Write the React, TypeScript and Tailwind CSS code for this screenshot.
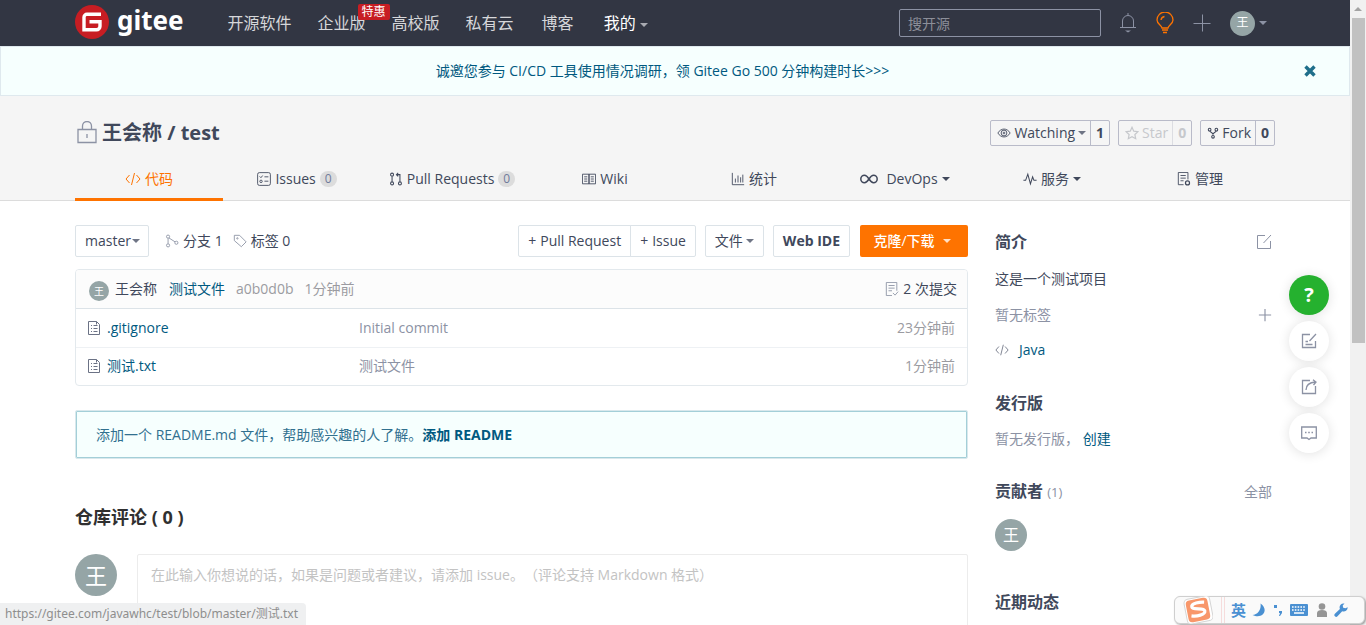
import React from "react";

type IconProps = { className?: string; children: React.ReactNode; box?: string };
function Icon({ className = "", children, box = "0 0 16 16" }: IconProps) {
  return (
    <svg viewBox={box} className={`shrink-0 ${className}`} fill="none" stroke="currentColor" strokeWidth="1" aria-hidden="true">
      {children}
    </svg>
  );
}

function Caret({ className = "" }: { className?: string }) {
  return (
    <svg viewBox="0 0 8 4" className={`h-1 w-2 shrink-0 ${className}`} fill="currentColor" aria-hidden="true">
      <path d="M0 0h8L4 4z" />
    </svg>
  );
}

function Avatar({ className }: { className: string }) {
  return (
    <span className={`flex shrink-0 items-center justify-center rounded-full bg-[#95a5a6] leading-none text-white ${className}`}>王</span>
  );
}

function CodeIcon({ className }: { className: string }) {
  return (
    <Icon className={className}>
      <path d="M4.500 4 1 8l3.500 4M11.500 4 15 8l-3.500 4M9.500 2l-3 12" />
    </Icon>
  );
}

function FileIcon() {
  return (
    <Icon className="h-4 w-4 text-[#6b7285]">
      <path d="M2.500 1.500h8l3 3v10h-11zM10.500 1.500v3M5 5.500h1M7.500 5.500h4M5 8.500h1M7.500 8.500h4M5 11.500h1M7.500 11.500h4" />
    </Icon>
  );
}

function Header() {
  return (
    <header className="h-[46px] shrink-0 bg-[#323643]">
      <div className="mx-auto flex h-full max-w-[1200px] items-center">
        <a href="#home" className="-mt-0.5 flex items-center gap-2 text-white">
          <svg viewBox="0 0 34 34" className="h-[34px] w-[34px]" aria-hidden="true">
            <circle cx="17" cy="17" r="17" fill="#c71d23" />
            <path d="M26 9.300H12a3 3 0 0 0-3 3v12.400h12.500a3.500 3.500 0 0 0 3.500-3.500v-4.500H14.500" fill="none" stroke="#fff" strokeWidth="3.400" />
          </svg>
          <span className="-mt-1 font-['Noto_Sans',sans-serif] text-[26px] leading-8 font-bold">gitee</span>
        </a>
        <nav className="ml-11 flex items-center gap-[26px] text-base text-[#d6d7da]">
          <a href="#explore">开源软件</a>
          <a href="#enterprise" className="relative">
            企业版
            <span className="absolute -top-[7px] left-10 w-8 rounded-xs bg-[#c71d23] text-center text-xs leading-4 text-white">特惠</span>
          </a>
          <a href="#education">高校版</a>
          <a href="#cloud">私有云</a>
          <a href="#blog" className="pl-0.5">博客</a>
          <button className="flex items-center gap-1 pl-1 text-white">
            我的
            <Caret className="mt-1 text-[#a9abb2]" />
          </button>
        </nav>
        <input
          type="text"
          aria-label="搜开源"
          placeholder="搜开源"
          className="ml-auto h-7 w-[202px] rounded-xs border border-[#8c92a4] bg-transparent px-2 text-sm text-white placeholder:text-[#8c8f99]"
        />
        <div className="mr-2 ml-[18px] flex items-center gap-[19px] text-[#8c92a4]">
          <button aria-label="通知">
            <Icon className="h-[22px] w-[18px]" box="0 0 18 22">
              <path d="M9 1v2M3.500 15.500V9a5.500 5.500 0 0 1 11 0v6.500M1 15.500h16" />
              <path d="M6 18.500h6l-3 2z" fill="currentColor" stroke="none" />
            </Icon>
          </button>
          <button aria-label="动态" className="text-[#fe7300]">
            <Icon className="h-[22px] w-[18px]" box="0 0 18 22">
              <path strokeWidth="1.300" d="M6 16c0-2.500-5-4-5-8a8 8 0 0 1 16 0c0 4-5 5.500-5 8zM5 8a4 4 0 0 1 3.500-3.500" />
              <path strokeWidth="1.600" d="M6 18h6M7 20.500h4" />
            </Icon>
          </button>
          <button aria-label="新建">
            <Icon className="h-[18px] w-[18px]" box="0 0 18 18">
              <path d="M9.500 .5v17M.5 9.500h17" />
            </Icon>
          </button>
          <button aria-label="用户" className="flex items-center gap-1">
            <Avatar className="h-[25px] w-[25px] text-xs" />
            <Caret />
          </button>
        </div>
      </div>
    </header>
  );
}

function CountButton({ icon, label, count, caret, muted }: { icon: React.ReactNode; label: string; count: number; caret?: boolean; muted?: boolean }) {
  return (
    <div className={`flex h-[26px] items-stretch rounded-xs border border-[#b9bbc9] text-sm ${muted ? "text-[#c6c8cc]" : "text-[#40485b]"}`}>
      <button className="flex items-center gap-[3px] pr-1 pl-1.5">
        {icon}
        {label}
        {caret && <Caret className="text-[#6f7585]" />}
      </button>
      <a href="#count" className={`flex w-[19px] items-center justify-center border-l font-bold ${muted ? "border-[#dcdde2]" : "border-[#b9bbc9]"}`}>
        {count}
      </a>
    </div>
  );
}

function Badge() {
  return <span className="rounded-full bg-[#dcdcdc] px-[5px] text-xs leading-4 text-[#6f7a9b]">0</span>;
}

function Tab({ children, active }: { children: React.ReactNode; active?: boolean }) {
  return (
    <a
      href="#tab"
      className={`flex h-[43px] items-center justify-center gap-1 border-b-3 pt-0.5 ${active ? "border-[#fe7300] text-[#fe7300]" : "border-transparent"}`}
    >
      {children}
    </a>
  );
}

function RepoHeader() {
  return (
    <section className="shrink-0 border-b border-[#dcdcdc] bg-[#f5f5f5] pt-6 text-[#40485b]">
      <div className="mx-auto max-w-[1200px]">
        <div className="flex h-[26px] items-center">
          <Icon className="mx-0.5 h-6 w-5 text-[#8c92a4]" box="0 0 20 24">
            <path strokeWidth="1.300" d="M1 8.500h18v13H1zM5.500 8.500V5a4.500 4.500 0 0 1 9 0v3.500M10 13v4" />
          </Icon>
          <h1 className="ml-[3px] text-xl leading-6 font-bold">
            <a href="#owner">王会称</a> / <a href="#repo">test</a>
          </h1>
          <div className="ml-auto flex gap-2">
            <CountButton
              caret
              label="Watching"
              count={1}
              icon={
                <Icon className="h-3.5 w-3.5">
                  <path d="M1 8c3.500-6 10.500-6 14 0-3.500 6-10.500 6-14 0z" />
                  <circle cx="8" cy="8" r="3.300" />
                  <circle cx="8" cy="8" r="1" />
                </Icon>
              }
            />
            <CountButton
              muted
              label="Star"
              count={0}
              icon={
                <Icon className="h-3.5 w-3.5">
                  <path strokeWidth="1.400" d="m8 1.500 2 4.400 4.800.6-3.500 3.300.9 4.700L8 12.200l-4.200 2.300.9-4.700L1.200 6.500 6 5.900z" />
                </Icon>
              }
            />
            <CountButton
              label="Fork"
              count={0}
              icon={
                <Icon className="h-3 w-3">
                  <g strokeWidth="1.400">
                    <circle cx="3.500" cy="3.500" r="1.800" />
                    <circle cx="12.500" cy="3.500" r="1.800" />
                    <circle cx="8" cy="13" r="1.800" />
                    <path d="M3.500 5.500 8 9l4.500-3.500M8 9v2" />
                  </g>
                </Icon>
              }
            />
          </div>
        </div>
        <nav className="mt-3 -mb-px grid grid-cols-[148fr_148fr_162fr_144fr_154fr_148fr_146fr_150fr] text-sm">
          <Tab active>
            <CodeIcon className="h-4 w-4" />
            代码
          </Tab>
          <Tab>
            <Icon className="h-3.5 w-3.5">
              <rect x=".7" y=".7" width="14.600" height="14.600" rx="2" />
              <path d="m3 5 1.500 1.500L6.500 4M8.500 5.500H13M8.500 10.500H13" />
              <circle cx="4.600" cy="10.700" r="1.400" />
            </Icon>
            Issues <Badge />
          </Tab>
          <Tab>
            <Icon className="h-3.5 w-3.5">
              <g strokeWidth="1.200">
                <circle cx="3.500" cy="3" r="1.700" />
                <circle cx="3.500" cy="13" r="1.700" />
                <circle cx="12.500" cy="13" r="1.700" />
                <path d="M3.500 5v6M8.500 3h4v8M10.500 1l-2 2 2 2" />
              </g>
            </Icon>
            Pull Requests <Badge />
          </Tab>
          <Tab>
            <Icon className="h-3.5 w-3.5">
              <path d="M.5 2.500H8v11H.5zM8 2.500h7.500v11H8zM2.500 5.500h3.500M2.500 8h3.500M2.500 10.500h3.500M10 5.500h3.500M10 8h3.500M10 10.500h3.500" />
            </Icon>
            Wiki
          </Tab>
          <Tab>
            <Icon className="h-3.5 w-3.5">
              <path d="M1.500 1v13.500H15M5 12V7.500M8 12V4M11 12V6M13.500 12V3" />
            </Icon>
            统计
          </Tab>
          <Tab>
            <Icon className="mr-1 h-3 w-[18px]" box="0 0 18 12">
              <path strokeWidth="1.500" d="M9 6C7 3 6 2.300 4.500 2.300a3.700 3.700 0 0 0 0 7.400C6 9.700 7 9 9 6s3-3.700 4.500-3.700a3.700 3.700 0 0 1 0 7.400C12 9.700 11 9 9 6z" />
            </Icon>
            DevOps <Caret />
          </Tab>
          <Tab>
            <Icon className="h-3.5 w-3.5">
              <path strokeWidth="1.200" d="M.5 9.500H3L5.500 2.500l3 11 2.500-8 1.500 4h3" />
            </Icon>
            服务 <Caret />
          </Tab>
          <Tab>
            <Icon className="h-3.5 w-3.5">
              <path d="M7.500 14.500H1.500v-14h11v8M4 4h6M4 7h6M4 10h3.500" />
              <circle cx="12" cy="12.500" r="2.300" strokeWidth="1.400" />
            </Icon>
            管理
          </Tab>
        </nav>
      </div>
    </section>
  );
}

function Toolbar() {
  const button = "flex h-8 items-center rounded-xs border border-[#dce3e8] px-[9px]";
  return (
    <div className="flex items-center text-sm">
      <button className={`${button} gap-px pr-2`}>
        master <Caret className="text-[#6f7585]" />
      </button>
      <a href="#branches" className="ml-4 flex items-center gap-1">
        <Icon className="h-3.5 w-3.5 text-[#8c92a4]">
          <circle cx="3.500" cy="3" r="1.800" />
          <circle cx="3.500" cy="13" r="1.800" />
          <circle cx="13" cy="10" r="1.800" />
          <path d="M3.500 5v6M4.500 4.500 11.500 9" />
        </Icon>
        分支 1
      </a>
      <a href="#tags" className="ml-2.5 flex items-center gap-1">
        <Icon className="h-3.5 w-3.5 text-[#8c92a4]">
          <path d="M1.500 1.500h6l7.500 7.500-5.500 5.500L1.500 7.500z" />
          <circle cx="5" cy="5" r=".8" />
        </Icon>
        标签 0
      </a>
      <div className="ml-auto flex">
        <a href="#new-pull" className={`${button} gap-1 rounded-r-none`}>
          <span>+</span>Pull Request
        </a>
        <a href="#new-issue" className={`${button} -ml-px gap-1 rounded-l-none`}>
          <span>+</span>Issue
        </a>
      </div>
      <button className={`${button} ml-[9px] gap-[3px]`}>
        文件 <Caret className="text-[#6f7585]" />
      </button>
      <a href="#ide" className={`${button} ml-[9px] font-bold`}>Web IDE</a>
      <button className="ml-2.5 flex h-8 w-[108px] items-center justify-center gap-2 rounded-xs bg-[#fe7300] pr-1 font-medium text-white">
        克隆/下载 <Caret className="text-[#ffe0c6]" />
      </button>
    </div>
  );
}

const files = [
  { name: ".gitignore", message: "Initial commit", age: "23分钟前" },
  { name: "测试.txt", message: "测试文件", age: "1分钟前" },
];

function FileBox() {
  return (
    <div className="mt-3 overflow-hidden rounded-sm border border-[#e3e9ed] text-sm">
      <div className="flex h-[39px] items-center border-b border-[#dce3e8] bg-[#fcfcfc] pr-2.5 pl-[13px]">
        <Avatar className="mt-1 h-5 w-5 text-[10px]" />
        <a href="#author" className="ml-1.5">王会称</a>
        <a href="#commit" className="ml-3 text-[#005980]">测试文件</a>
        <a href="#sha" className="ml-[11px] text-[#9b9ba1]">a0b0d0b</a>
        <span className="ml-[11px] text-[#9b9ba1]">1分钟前</span>
        <a href="#commits" className="ml-auto flex items-center gap-1">
          <Icon className="h-3.5 w-3.5 text-[#8c92a4]">
            <path d="M8 15.500H1.500V.5h12v9.500M4 4h7M4 7h7M4 10h4M9 12.500l2.500 2.500 3.500-4" />
          </Icon>
          2 次提交
        </a>
      </div>
      <table className="w-full table-fixed">
        <tbody>
          {files.map((file) => (
            <tr key={file.name} className="h-[38px] border-b border-[#eef1f4] last:border-b-0">
              <td className="w-[283px] pl-2.5 text-[#005980]">
                <a href="#file" className="flex items-center gap-[5px]">
                  <FileIcon />
                  {file.name}
                </a>
              </td>
              <td className="text-[#8c92a4]">{file.message}</td>
              <td className="w-40 pr-3 text-right text-[#9b9ba1]">{file.age}</td>
            </tr>
          ))}
        </tbody>
      </table>
    </div>
  );
}

function Comments() {
  return (
    <section>
      <h2 className="mt-11 text-lg leading-7 font-bold text-[#303030]">仓库评论 ( 0 )</h2>
      <div className="mt-[23px] flex gap-5">
        <Avatar className="h-[42px] w-[42px] text-[22px]" />
        <textarea
          aria-label="评论"
          placeholder="在此输入你想说的话，如果是问题或者建议，请添加 issue。（评论支持 Markdown 格式）"
          className="h-32 flex-1 resize-none rounded-xs border border-[#ececec] px-[13px] py-2.5 text-sm placeholder:text-[#c3c3c3]"
        />
      </div>
    </section>
  );
}

function Sidebar() {
  const title = "text-base leading-6 font-bold";
  return (
    <aside className="w-[277px] shrink-0 pt-[5px] text-sm">
      <div className="flex items-center justify-between">
        <h2 className={title}>简介</h2>
        <button aria-label="编辑" className="text-[#8c92a4]">
          <Icon className="h-4 w-4">
            <path d="M9 1.500H1.500v13h13V7M15 1 7.500 9" />
          </Icon>
        </button>
      </div>
      <p className="mt-[15px]">这是一个测试项目</p>
      <div className="mt-4 flex items-center justify-between text-[#8c92a4]">
        暂无标签
        <button aria-label="添加标签">
          <Icon className="h-3.5 w-3.5">
            <path strokeWidth="1.300" d="M8 1v14M1 8h14" />
          </Icon>
        </button>
      </div>
      <div className="mt-[15px] flex items-center gap-2.5">
        <CodeIcon className="h-3.5 w-3.5 text-[#6f7585]" />
        <a href="#java" className="text-[#005980]">Java</a>
      </div>
      <h2 className={`mt-[31px] ${title}`}>发行版</h2>
      <p className="mt-3.5 text-[#8c92a4]">
        暂无发行版， <a href="#release" className="text-[#005980]">创建</a>
      </p>
      <div className="mt-[30px] flex items-center justify-between">
        <h2 className={title}>
          贡献者 <span className="text-[13px] font-normal text-[#8c92a4]">(1)</span>
        </h2>
        <a href="#all" className="text-[#8c92a4]">全部</a>
      </div>
      <Avatar className="mt-[15px] h-8 w-8 text-base" />
      <h2 className={`mt-[39px] ${title}`}>近期动态</h2>
    </aside>
  );
}

function FloatingTools() {
  const round = "flex h-10 w-10 items-center justify-center rounded-full shadow-[0_1px_12px_rgba(0,0,0,0.12)]";
  return (
    <div className="absolute top-[275px] right-[37px] flex flex-col gap-1.5 text-[#8c92a4]">
      <button className={`${round} bg-[#25b12f] text-xl font-bold text-white`}>?</button>
      <button aria-label="反馈" className={`${round} bg-white`}>
        <Icon className="h-4 w-4">
          <path strokeWidth="1.300" d="M9 1.500H1.500v13h13V8M15 1 8.500 8M4.500 8.500H7M4.500 11.500h7" />
        </Icon>
      </button>
      <button aria-label="分享" className={`${round} bg-white`}>
        <Icon className="h-4 w-4">
          <path strokeWidth="1.300" d="M9 1.500H1.500v13h13V7M5 11c0-4 3-7.500 9.500-8M12 .7 15 3l-2.500 3" />
        </Icon>
      </button>
      <button aria-label="评论" className={`${round} bg-white`}>
        <Icon className="h-4 w-4">
          <path strokeWidth="1.300" d="M.7 2h14.600v11H10l-2 1.500L6 13H.7z" />
          <path strokeWidth="1.600" d="M4 7.500h1.500M7.200 7.500h1.600M10.500 7.500H12" />
        </Icon>
      </button>
    </div>
  );
}

function InputBar() {
  return (
    <div className="absolute right-px bottom-px flex h-7 w-[191px] items-center rounded-md border border-[#cfcfcf] bg-[#fafafa] text-[#4a90d2] shadow-[1px_1px_2px_rgba(0,0,0,0.35)]">
      <svg viewBox="0 0 30 28" className="ml-2 h-7 w-[30px]" aria-hidden="true">
        <g transform="rotate(-11 15 14)">
          <rect x="2.500" y="1.500" width="26" height="25" rx="4" fill="#fff" stroke="#d5d5d5" />
          <rect x="4" y="3" width="22" height="22" rx="4" fill="#f8976b" />
          <path d="M22.500 7.500c-4-1-13-1.500-13 2.300 0 4 12 2.300 12 6.400 0 4-9 4-14 2.300" fill="none" stroke="#fff" strokeWidth="3.200" />
        </g>
      </svg>
      <span className="ml-2 h-full w-1 border-x border-[#f6dcdc]" />
      <div className="ml-1.5 flex items-center gap-1.5">
        <span className="text-[15px] leading-5 font-bold">英</span>
        <svg viewBox="0 0 14 14" className="h-3.5 w-3.5" fill="currentColor" aria-hidden="true">
          <path d="M8.500 .5c9 6 2 16.500-8 11.500C6 11.500 9.500 6 8.500 .5z" />
        </svg>
        <svg viewBox="0 0 12 14" className="h-3.5 w-3" fill="currentColor" aria-hidden="true">
          <path d="M2 2h3v3H2zM7 8h3v2l-2 3H7l1-3H7z" />
        </svg>
        <svg viewBox="0 0 18 12" className="h-3 w-[18px]" fill="currentColor" aria-hidden="true">
          <rect width="18" height="12" rx="1" />
          <path d="M2 3h14M2 6h14" stroke="#fff" strokeWidth="1.600" strokeDasharray="1.600 1.200" />
          <path d="M4 9h10" stroke="#fff" strokeWidth="1.500" />
        </svg>
        <svg viewBox="0 0 12 14" className="ml-0.5 h-3.5 w-3 text-[#959595]" fill="currentColor" aria-hidden="true">
          <circle cx="6" cy="3.500" r="3.300" />
          <path d="M1 14V10c0-2 2-3 5-3s5 1 5 3v4z" />
        </svg>
        <svg viewBox="0 0 14 14" className="h-3.5 w-3.5" fill="currentColor" aria-hidden="true">
          <path d="M13.700 4.200a4 4 0 0 1-5.500 4L3.500 13.300a1.700 1.700 0 0 1-2.600-2.500l5-4.900A4 4 0 0 1 10.500.5L8.700 2.600l.5 2.200 2.200.5z" />
        </svg>
      </div>
    </div>
  );
}

function Scrollbar() {
  return (
    <div className="flex w-4 shrink-0 flex-col items-center bg-[#f1f1f1]" aria-hidden="true">
      <svg viewBox="0 0 8 4" className="my-[7px] h-1 w-2 text-[#a3a3a3]" fill="currentColor">
        <path d="M0 4h8L4 0z" />
      </svg>
      <div className="h-[52%] w-[13px] bg-[#c1c1c1]" />
    </div>
  );
}

export default function App() {
  return (
    <div className="relative flex h-screen overflow-hidden bg-white font-['Open_Sans','Noto_Sans_CJK_SC',sans-serif] leading-5 text-[#40485b] [text-spacing-trim:space-all]">
      <div className="flex min-w-0 flex-1 flex-col overflow-hidden">
        <Header />
        <div className="flex h-[50px] shrink-0 items-center border border-[#dfe9ee] bg-[#f6fffe] text-sm text-[#005980]">
          <a href="#survey" className="flex-1 pl-5 text-center">
            诚邀您参与 CI/CD 工具使用情况调研，领 Gitee Go 500 分钟构建时长&gt;&gt;&gt;
          </a>
          <button aria-label="关闭" className="mr-[33px] text-[#1f6f8b]">
            <Icon className="h-3 w-3" box="0 0 12 12">
              <path strokeWidth="3.400" d="m1.500 1.500 9 9M10.500 1.500l-9 9" />
            </Icon>
          </button>
        </div>
        <RepoHeader />
        <main className="mx-auto flex w-full max-w-[1200px] gap-[27px] pt-6 pr-[3px]">
          <div className="min-w-0 flex-1">
            <Toolbar />
            <FileBox />
            <div className="mt-6 flex h-[49px] items-center rounded-xs border border-[#d9e8ec] bg-[#f6fffe] px-5 text-sm text-[#31708f] inset-ring inset-ring-[#a3cfd8]">
              添加一个 README.md 文件，帮助感兴趣的人了解。
              <a href="#readme" className="font-bold text-[#005980]">添加 README</a>
            </div>
            <Comments />
          </div>
          <Sidebar />
        </main>
      </div>
      <Scrollbar />
      <FloatingTools />
      <div className="absolute bottom-0 left-0 rounded-tr-sm bg-[#eeeff0]/95 pr-2 pl-[5px] font-['Noto_Sans','Noto_Sans_CJK_SC',sans-serif] text-xs leading-[22px] text-[#8e8e8e]">
        https://gitee.com/javawhc/test/blob/master/测试.txt
      </div>
      <InputBar />
    </div>
  );
}
